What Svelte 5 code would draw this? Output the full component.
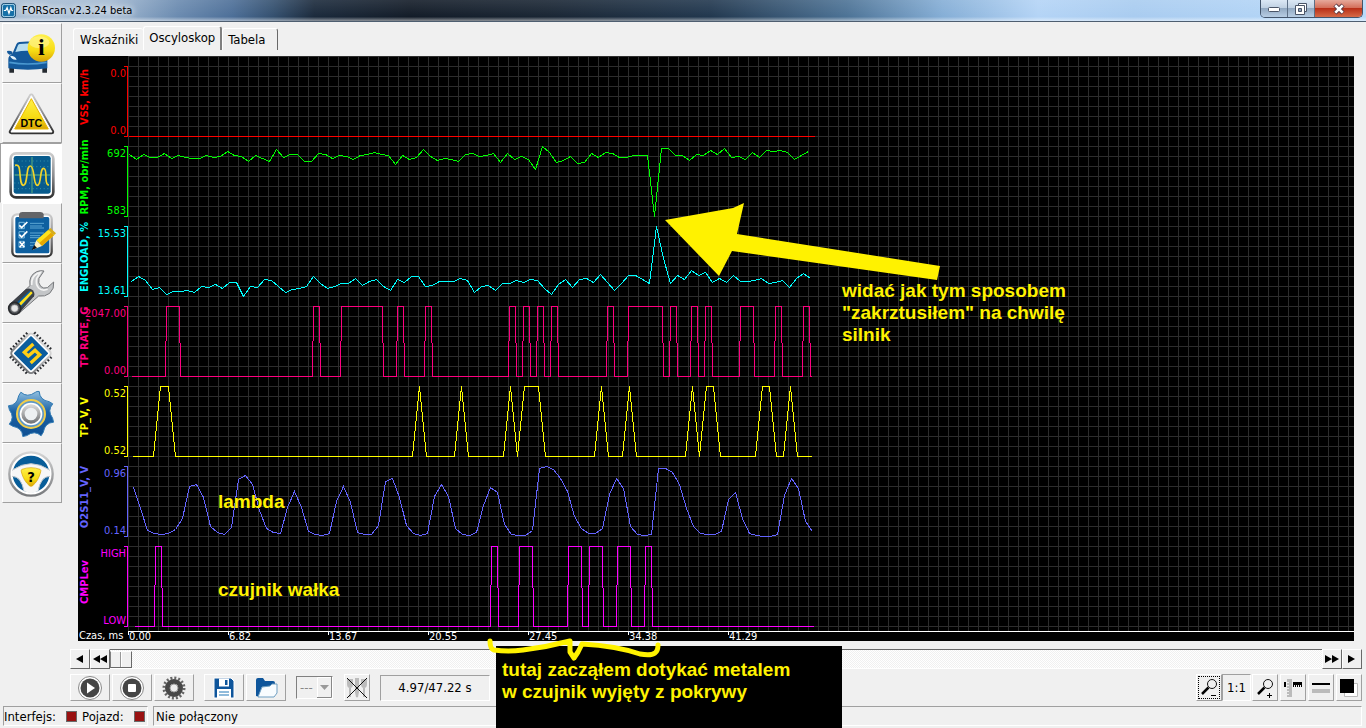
<script lang="ts">
    type Channel = {
        name: string;
        color: string;
        top: number;
        height: number;
        labels: [string, string];
        start: number;
        end?: number;
        samples?: number[];
        pulses?: [number, number][];
        points?: [number, number][];
    };

    const STEP = 7;

    const channels: Channel[] = [
        { name: 'VSS, km/h', color: '#f00', top: 10, height: 70, labels: ['0.0', '0.0'], start: 50, end: 736, pulses: [] },
        {
            name: 'RPM, obr/min', color: '#0f0', top: 90, height: 70, labels: ['692', '583'], start: 51,
            samples: [
                8, 13, 8, 11, 11, 7, 12, 9, 11, 12, 12, 9, 11, 10, 5, 9, 10, 15, 9, 12, 15, 3, 11, 8, 8, 15, 15, 7, 8, 12,
                9, 10, 13, 9, 8, 6, 8, 9, 18, 9, 13, 11, 3, 10, 14, 12, 13, 15, 8, 7, 10, 9, 7, 16, 7, 13, 10, 13, 23, 0,
                6, 16, 14, 10, 17, 16, 7, 11, 6, 7, 11, 11, 9, 9, 9, 70, 2, 2, 9, 9, 14, 8, 9, 4, 8, 2, 11, 10, 13, 6,
                11, 4, 5, 4, 6, 13, 9, 5
            ]
        },
        {
            name: 'ENGLOAD, %', color: '#0ff', top: 170, height: 70, labels: ['15.53', '13.61'], start: 53,
            samples: [
                55, 50, 54, 63, 61, 68, 65, 65, 64, 66, 60, 61, 58, 62, 56, 56, 70, 60, 61, 53, 54, 60, 66, 63, 62, 60,
                50, 57, 62, 60, 57, 57, 52, 59, 55, 53, 60, 64, 53, 56, 50, 50, 60, 59, 55, 55, 55, 52, 54, 66, 60, 59,
                64, 57, 57, 54, 56, 53, 54, 62, 68, 58, 53, 61, 53, 52, 56, 48, 56, 64, 57, 49, 49, 53, 57, 0, 32, 57,
                49, 53, 44, 49, 46, 56, 52, 56, 49, 55, 55, 54, 52, 57, 56, 54, 61, 52, 47, 52
            ]
        },
        {
            name: 'TP RATE, G', color: '#ff0080', top: 250, height: 70, labels: ['2047.00', '0.00'], start: 53, end: 733,
            pulses: [
                [87, 102], [234, 242], [262, 305], [318, 326], [346, 354], [430, 438], [444, 452], [458, 466],
                [472, 480], [528, 536], [549, 585], [591, 599], [612, 620], [626, 634], [661, 676], [696, 704], [724, 732]
            ]
        },
        {
            name: 'TP_V, V', color: '#ff0', top: 330, height: 70, labels: ['0.52', '0.52'], start: 54,
            points: [
                [54, 70], [75, 70], [82, 0], [90, 0], [97, 70], [334, 70], [341, 0], [348, 70], [376, 70], [383, 0],
                [390, 70], [425, 70], [432, 0], [439, 70], [446, 0], [460, 0], [467, 70], [516, 70], [523, 0], [530, 70],
                [544, 70], [551, 0], [558, 70], [607, 70], [614, 0], [621, 70], [628, 0], [635, 0], [642, 70], [677, 70],
                [684, 0], [691, 0], [698, 70], [705, 70], [712, 0], [719, 70], [733, 70]
            ]
        },
        {
            name: 'O2S11_V, V', color: '#6464ff', top: 410, height: 70, labels: ['0.96', '0.14'], start: 55,
            samples: [
                21, 42, 64, 67, 68, 67, 63, 52, 20, 18, 31, 60, 66, 68, 61, 13, 9, 18, 44, 62, 66, 67, 41, 25, 41, 65,
                68, 69, 67, 35, 20, 36, 66, 68, 68, 59, 15, 12, 31, 59, 67, 69, 67, 30, 18, 30, 62, 68, 69, 66, 39, 21,
                26, 58, 68, 69, 69, 64, 2, 0, 3, 12, 25, 50, 62, 67, 67, 62, 28, 12, 22, 60, 68, 69, 68, 2, 2, 6, 18,
                42, 60, 67, 68, 68, 65, 33, 26, 52, 67, 69, 70, 70, 68, 29, 12, 22, 55, 65
            ]
        },
        {
            name: 'CMPLev', color: '#f0f', top: 490, height: 80, labels: ['HIGH', 'LOW'], start: 56, end: 735,
            pulses: [[76, 84], [412, 420], [440, 455], [489, 504], [510, 525], [538, 553], [566, 574]]
        }
    ];

    const times = ['0.00', '6.82', '13.67', '20.55', '27.45', '34.38', '41.29'];
    const tools = ['car', 'dtc', 'scope', 'tests', 'service', 'chip', 'settings', 'help'];
    const tabs = ['Wskaźniki', 'Oscyloskop', 'Tabela'];

    let activeTool = $state('scope');
    let activeTab = $state('Oscyloskop');
    let position = $state(0);

    function trace(c: Channel) {
        if (c.samples) {
            return c.samples.map((v, i) => `${c.start + i * STEP},${c.top + v}`).join(' ');
        }
        if (c.points) {
            return c.points.map(([x, y]) => `${x},${c.top + y}`).join(' ');
        }
        const low = c.top + c.height;
        const out = [`${c.start},${low}`];
        for (const [a, b] of c.pulses ?? []) {
            out.push(`${a},${low}`, `${a + 1},${c.top}`, `${b - 1},${c.top}`, `${b},${low}`);
        }
        out.push(`${c.end},${low}`);
        return out.join(' ');
    }

    function polar(deg: number, r: number) {
        const a = (deg * Math.PI) / 180;
        return `${(87 + r * Math.cos(a)).toFixed(1)} ${(93 + r * Math.sin(a)).toFixed(1)}`;
    }

    // eight teeth with hollows curved between them
    function gear() {
        let d = `M${polar(-75, 70)}`;
        for (let a = -75; a < 285; a += 45) {
            d += `L${polar(a + 5, 72)}Q${polar(a + 17, 49)} ${polar(a + 41, 66)}`;
        }
        return d + 'z';
    }
</script>

<div class="window">
    <header class="titlebar">
        <svg class="app-icon" viewBox="0 0 16 16" aria-hidden="true">
            <rect x="0.5" y="0.5" width="15" height="15" rx="3" fill="#1670a8" stroke="#0c3f66" />
            <rect x="1.5" y="1.5" width="13" height="13" rx="2" fill="none" stroke="#b9dcef" />
            <path d="M3 8h2l1.5-3 2 6 2-6 1 3h1.5" fill="none" stroke="#fff" stroke-width="1.3" />
        </svg>
        <span class="title">FORScan v2.3.24 beta</span>
        <div class="window-buttons">
            <button class="min" aria-label="Minimalizuj">
                <svg width="14" height="8" viewBox="0 0 14 8"><rect x="1.5" y="2.5" width="11" height="4" rx="1" fill="#fff" stroke="#4a5568" /></svg>
            </button>
            <button class="max" aria-label="Przywróć">
                <svg width="14" height="14" viewBox="0 0 14 14">
                    <path d="M4.5 1.5h8v8h-8z" fill="#fff" stroke="#4a5568" />
                    <path d="M1.5 3.5h9v9h-9z" fill="#fff" stroke="#4a5568" />
                    <path d="M4.5 6.5h3v3h-3z" fill="#8fa3ba" stroke="#4a5568" />
                </svg>
            </button>
            <button class="close" aria-label="Zamknij">
                <svg width="14" height="12" viewBox="0 0 14 12">
                    <path d="M3 2l8 8M11 2l-8 8" stroke="#5a3a44" stroke-width="4.5" />
                    <path d="M3.3 2.3l7.4 7.4M10.7 2.3l-7.4 7.4" stroke="#fff" stroke-width="2.6" />
                </svg>
            </button>
        </div>
    </header>

    <div class="body">
        <nav class="sidebar">
            {#each tools as tool}
                <button class="tool" class:active={tool === activeTool} aria-label={tool} onclick={() => (activeTool = tool)}>
                    <svg viewBox="0 0 180 180" width="60" height="60">
                        {#if tool === 'car'}
                            <path d="M22 149h14v-14h-14zM121 149h14v-14h-14z" fill="#252a30" />
                            <path d="M19 136V108q0-10 12-16L43 64q2-6 9-7 24-3 48 0 7 1 9 7l8 24q18 6 19 20v28q-58 8-117 0z" fill="#14599b" />
                            <path d="M40 87l8-20q2-4 6-4 22-3 44 0 4 0 6 4l6 20q-35-7-70 0z" fill="#b8def0" />
                            <path d="M15 84q8-3 16 2l1 7-10 2q-8-4-7-11z" fill="#14599b" />
                            <path d="M24 98q16 0 20 12-14 2-20-12zM132 98q-16 0-20 12 14 2 20-12z" fill="#e4f3fb" />
                            <path d="M22 118q55 10 112 0" fill="none" stroke="#4a98d0" stroke-width="5" />
                            <circle cx="118" cy="75" r="41" fill="url(#gold)" />
                            <ellipse cx="112" cy="58" rx="30" ry="18" fill="#fff59a" opacity="0.6" />
                            <text x="118" y="97" font-family="Liberation Serif, serif" font-weight="bold" font-size="72" text-anchor="middle">i</text>
                        {:else if tool === 'dtc'}
                            <path d="M88 39L28 146H149z" fill="#fff" stroke="url(#steel)" stroke-width="15" stroke-linejoin="round" />
                            <path d="M88 38L27 147H150z" fill="#fff" stroke="#fff" stroke-width="3" stroke-linejoin="round" />
                            <path d="M88 47L38 138H139z" fill="url(#gold)" stroke="#e8b800" stroke-width="3" stroke-linejoin="round" />
                            <text x="88" y="131" font-family="Liberation Sans, sans-serif" font-weight="bold" font-size="32" text-anchor="middle">DTC</text>
                        {:else if tool === 'scope'}
                            <rect x="26" y="31" width="128" height="132" rx="16" fill="#fff" stroke="url(#steel)" stroke-width="8" />
                            <rect x="35" y="39" width="111" height="113" rx="7" fill="#075b8d" />
                            <path d="M37 54h108M37 71h108M37 120h108M37 137h108" stroke="#3491ac" stroke-width="3" stroke-dasharray="3 8" />
                            <path d="M90 42v108M38 96h106" stroke="#4a9a82" stroke-width="4" />
                            <path d="M39 67c13-3 13 7 15 27s3 33 10 33 9-15 11-32 3-26 10-26 9 16 11 30 3 28 10 28 8-14 10-28 3-23 9-23 7 15 7 28 2 22 9 22" fill="none" stroke="#f3d42a" stroke-width="5" />
                        {:else if tool === 'tests'}
                            <rect x="31" y="34" width="118" height="126" rx="14" fill="#fff" stroke="url(#steel)" stroke-width="7" />
                            <rect x="40" y="42" width="102" height="109" rx="5" fill="#0e60a0" />
                            <path d="M51 46V34q2-7 10-7h54q8 0 10 7v12z" fill="#646568" />
                            <path d="M51 58h16v19h-16zM51 86h16v19h-16zM51 115h16v18h-16z" fill="none" stroke="#76b6dc" stroke-width="3" />
                            <path d="M52 67l7 7 17-17M52 95l7 7 17-17M53 116l14 17M67 116l-14 17" fill="none" stroke="#fff" stroke-width="5" />
                            <path d="M84 61h42M84 69h36M84 75h42M84 90h42M84 98h30M84 104h35M84 119h20M84 127h10" stroke="#5ca6d3" stroke-width="3" />
                            <path d="M103 112l36-32 17 17-36 32z" fill="#ffe31c" /><path d="M111 121l36-32 9 8-36 32z" fill="#e5a700" />
                            <path d="M139 80l6-5 17 16-6 6z" fill="#d8ae19" />
                            <path d="M103 112l17 17-28 11z" fill="#fff2c4" /><path d="M97 126l8 9-16 6z" fill="#111" />
                        {:else if tool === 'service'}
                            <path d="M24 124L84 68q-5-30 20-42 12-5 22-2l-15 22q-4 14 5 24 8 8 20 4l19-17q3 20-12 34-14 11-33 8L52 150z" fill="#c4c6c8" stroke="#77797c" stroke-width="3" />
                            <path d="M89 66q-2-24 18-35l8-2-11 18q-4 17 6 28 11 10 27 4" fill="none" stroke="#f4f4f4" stroke-width="5" />
                            <path d="M24 122L72 78q12-5 20 4t4 18L52 150z" fill="#3d4148" />
                            <path d="M42 121l41-38 8 8-36 44z" fill="#0a5f9d" /><path d="M51 121l36-36 5 5-36 38z" fill="#ffdf19" />
                            <circle cx="38" cy="136" r="18" fill="#55585c" stroke="#292b2e" stroke-width="5" />
                            <circle cx="38" cy="136" r="10" fill="#e8e8e8" stroke="#bbb" stroke-width="2" />
                        {:else if tool === 'chip'}
                            <g transform="rotate(45 87 91)">
                                <path d="M52 36v110M63 36v110M74 36v110M85 36v110M96 36v110M107 36v110M118 36v110M32 58h110M32 69h110M32 80h110M32 91h110M32 102h110M32 113h110M32 124h110" stroke="#292b2f" stroke-width="5" />
                                <rect x="42" y="46" width="90" height="90" rx="11" fill="#fff" stroke="url(#steelLight)" stroke-width="6" />
                                <rect x="50" y="54" width="74" height="74" rx="3" fill="#0b5d9e" />
                            </g>
                            <path d="M94 63L67 88L79 99L99 82L113 95L86 120" fill="none" stroke="#ffcf16" stroke-width="10" />
                        {:else if tool === 'settings'}
                            <path d={gear()} fill="url(#blue)" stroke="#327bb4" stroke-width="3" stroke-linejoin="round" />
                            <circle cx="87" cy="93" r="42" fill="#5d97c6" stroke="#f0cd4b" stroke-width="6" />
                            <circle cx="87" cy="93" r="34" fill="#fff" />
                            <circle cx="87" cy="93" r="24" fill="#edf0f2" stroke="url(#steelLight)" stroke-width="10" />
                        {:else}
                            <circle cx="87" cy="93" r="65" fill="#fff" stroke="url(#steelLight)" stroke-width="7" />
                            <circle cx="87" cy="93" r="55" fill="#075d99" />
                            <path d="M30 82q57-40 114 0v18q-28 0-36 45l-21 6-21-6q-8-45-36-45z" fill="#f7f7f7" />
                            <path d="M30 82q57-40 114 0M30 100q28 0 36 45M144 100q-28 0-36 45" fill="none" stroke="#c2c8cc" stroke-width="3" />
                            <path d="M60 79q27-10 54 0 4 1 2 8-7 27-24 41-5 4-10 0-17-14-24-41-2-7 2-8z" fill="url(#gold)" stroke="#d6a507" stroke-width="2" />
                            <text x="87" y="118" font-family="DejaVu Sans, sans-serif" font-weight="bold" font-size="44" text-anchor="middle">?</text>
                        {/if}
                    </svg>
                </button>
            {/each}
        </nav>

        <main class="content">
            <div class="tabs" role="tablist">
                {#each tabs as tab}
                    <button class="tab" role="tab" class:active={tab === activeTab} aria-selected={tab === activeTab} onclick={() => (activeTab = tab)}>{tab}</button>
                {/each}
            </div>

            <div class="chart">
                <svg class="plot" width="100%" height="585">
                    <defs>
                        <pattern id="grid" x="0" width="10" height="10" patternUnits="userSpaceOnUse">
                            <path d="M0 0.5H10M0.5 0V10" stroke="#2d2d2d" />
                        </pattern>
                    </defs>
                    <rect class="grid" x="50" height="575" fill="url(#grid)" />
                    <g class="lines" transform="translate(0.5 0.5)">
                        {#each channels as c}
                            <path d="M45 {c.top}H49V{c.top + c.height}H45" stroke={c.color} />
                            <polyline points={trace(c)} stroke={c.color} />
                        {/each}
                        {#each times as _, i}
                            <path d="M{50 + i * 100} 575v3" stroke="#fff" />
                        {/each}
                    </g>
                    <rect class="grid" x="50" y="575" height="1" fill="#fff" />
                    {#each channels as c}
                        <g fill={c.color}>
                            <text class="channel" text-anchor="middle" transform="translate(10 {c.top + c.height / 2 - 4}) rotate(-90)">{c.name}</text>
                            <text x="48" y={c.top + 11} text-anchor="end">{c.labels[0]}</text>
                            <text x="48" y={c.top + c.height - 2} text-anchor="end">{c.labels[1]}</text>
                        </g>
                    {/each}
                    <g class="remark">
                        <path d="M587 164L655 152L666 147L659 178L862 210L859 224L654 195L641 220z" />
                        <text x="140" y="452">lambda</text>
                        <text x="140" y="540">czujnik wałka</text>
                        <text x="764" y="241">widać jak tym sposobem</text>
                        <text x="764" y="263">"zakrztusiłem" na chwilę</text>
                        <text x="764" y="285">silnik</text>
                    </g>
                    <g fill="#fff">
                        <text x="1" y="583">Czas, ms</text>
                        {#each times as t, i}
                            <text x={51 + i * 100} y="584">{t}</text>
                        {/each}
                    </g>
                </svg>
                <div class="note">
                    <svg class="brace" width="180" height="26" viewBox="0 0 180 26" aria-hidden="true">
                        <path d="M4 5q0 8 4 9 14 2 29 0 24-3 47-9v11l4 6 4-6 4-8q35 2 58 10 11 2 15-1 3-2 3-8" fill="none" stroke="#fff200" stroke-width="5" stroke-linecap="round" stroke-linejoin="round" />
                    </svg>
                    tutaj zacząłem dotykać metalem<br />w czujnik wyjęty z pokrywy
                </div>
            </div>

            <div class="scroller">
                <button aria-label="Wstecz"><svg width="8" height="8"><path d="M7 0v8L0 4z" /></svg></button>
                <button aria-label="Szybko wstecz"><svg width="14" height="8"><path d="M7 0v8L0 4zM14 0v8L7 4z" /></svg></button>
                <input type="range" min="0" max="100" bind:value={position} aria-label="Pozycja" />
                <button aria-label="Szybko naprzód"><svg width="14" height="8"><path d="M0 0v8l7-4zM7 0v8l7-4z" /></svg></button>
                <button aria-label="Naprzód"><svg width="8" height="8"><path d="M0 0v8l7-4z" /></svg></button>
            </div>

            <div class="toolbar">
                <button class="wide" aria-label="Start">
                    <svg width="24" height="24" viewBox="0 0 24 24"><circle cx="12" cy="12" r="11.5" fill="#fff" stroke="#888" /><circle cx="12" cy="12" r="9.5" fill="#454545" /><path d="M9 6.5v11l8-5.5z" fill="#fff" /></svg>
                </button>
                <button class="wide" aria-label="Stop">
                    <svg width="24" height="24" viewBox="0 0 24 24"><circle cx="12" cy="12" r="11.5" fill="#fff" stroke="#888" /><circle cx="12" cy="12" r="9.5" fill="#454545" /><rect x="8" y="8" width="8" height="8" rx="1" fill="#fff" /></svg>
                </button>
                <button class="wide" aria-label="Ustawienia">
                    <svg width="24" height="24" viewBox="0 0 24 24">
                        <circle cx="12" cy="12" r="10" fill="none" stroke="#666" stroke-width="3" stroke-dasharray="2 1.927" />
                        <circle cx="12" cy="12" r="6.5" fill="none" stroke="#484848" stroke-width="5" />
                        <circle cx="12" cy="12" r="4" fill="#eee" stroke="#999" />
                    </svg>
                </button>
                <button class="wide save" aria-label="Zapisz">
                    <svg width="22" height="22" viewBox="0 0 22 22"><path d="M1 1h17l3 3v17H1z" fill="#0e559b" stroke="#fff" /><path d="M6 1.5h10v8H6z" fill="#fff" /><path d="M12 3h2.5v5H12z" fill="#0e559b" /><path d="M4 12h14v9H4z" fill="#fff" /><path d="M6 15h10M6 18h10" stroke="#6ca5cf" stroke-width="1.5" /></svg>
                </button>
                <button class="wide" aria-label="Otwórz">
                    <svg width="24" height="22" viewBox="0 0 24 22"><path d="M2 19V3q0-2 2-2h5l2 3h8q2 0 2 2v4L6 20z" fill="#0e559b" /><path d="M8 10l8-1 2-2h5v9l-3 4H4z" fill="#f8fcff" stroke="#6f9fc2" /></svg>
                </button>
                <div class="combo">
                    <select disabled aria-label="Kanał"><option>---</option></select>
                    <svg width="15" height="21"><path d="M0.5 21V0.5H15" fill="none" stroke="#fff" /><path d="M14.5 0V20.5H0" fill="none" stroke="#888" /><path d="M3 8h9l-4.5 5z" fill="#999" /></svg>
                </div>
                <button class="small filter" aria-label="Filtr">
                    <svg width="22" height="22" viewBox="0 0 22 22"><path d="M2 2v5q0 3 2 3v10M4 2v8M6 2v5q0 3-2 3M10 1v14l1 5 1-5V1M16 2v5q0 3 2 3v10M18 2v8M20 2v5q0 3-2 3" fill="none" stroke="#bbb" stroke-width="2" /><path d="M1 1l20 20M21 1L1 21" stroke="#111" /></svg>
                </button>
                <output class="clock">4.97/47.22 s</output>
                <div class="view-buttons">
                    <button class="small focused" aria-label="Pomniejsz">
                        <svg width="20" height="20" viewBox="0 0 20 20"><circle cx="13" cy="6" r="4.5" fill="none" stroke="#111" /><path d="M9.5 9.5L3 16" stroke="#000" stroke-width="2.5" /><path d="M12 17.5h5" stroke="#000" /></svg>
                    </button>
                    <button class="small pressed">1:1</button>
                    <button class="small" aria-label="Powiększ">
                        <svg width="20" height="20" viewBox="0 0 20 20"><circle cx="13" cy="6" r="4.5" fill="none" stroke="#111" /><path d="M9.5 9.5L3 16" stroke="#000" stroke-width="2.5" /><path d="M12 17.5h5M14.5 15v5" stroke="#000" /></svg>
                    </button>
                    <button class="small" aria-label="Podziałka">
                        <svg width="20" height="20" viewBox="0 0 20 20"><path d="M4 1h5v18H4z" fill="#bbb" /><path d="M4 4.5h2M4 7.5h2M4 10.5h2M4 13.5h2M4 16.5h2" stroke="#eee" /><path d="M1 4h2v5H1zM10 4h9v3h-9z" /><path d="M10.5 4v5M12.5 4v5M14.5 4v5M16.5 4v5M18.5 4v5" stroke="#000" /></svg>
                    </button>
                    <button class="small" aria-label="Linie">
                        <svg width="20" height="20" viewBox="0 0 20 20"><path d="M1 5h18v2H1z" /><path d="M1 11h18v4H1z" fill="#bbb" /></svg>
                    </button>
                    <button class="small" aria-label="Kolory">
                        <svg width="20" height="20" viewBox="0 0 20 20"><path d="M5.5 5.5h13v13h-13z" fill="#fff" stroke="#bbb" /><path d="M1 1h14v14H1z" /></svg>
                    </button>
                </div>
            </div>
        </main>
    </div>

    <footer class="status">
        <div class="panel leds">
            <span>Interfejs:</span><i class="led"></i>
            <span>Pojazd:</span><i class="led"></i>
        </div>
        <div class="panel message">Nie połączony</div>
    </footer>

    <svg class="defs" width="0" height="0" aria-hidden="true">
        <linearGradient id="gold" x1="0" y1="0" x2="0" y2="1"><stop offset="0" stop-color="#fff04a" /><stop offset="0.6" stop-color="#f7dc14" /><stop offset="1" stop-color="#d9a404" /></linearGradient>
        <linearGradient id="steel" x1="0" y1="0" x2="0" y2="1"><stop offset="0" stop-color="#ccc" /><stop offset="0.5" stop-color="#8d8d90" /><stop offset="1" stop-color="#333" /></linearGradient>
        <linearGradient id="steelLight" x1="0" y1="0" x2="0" y2="1"><stop offset="0" stop-color="#d5d5d5" /><stop offset="1" stop-color="#77797c" /></linearGradient>
        <linearGradient id="blue" x1="0" y1="0" x2="0" y2="1"><stop offset="0" stop-color="#8fbfe0" /><stop offset="0.45" stop-color="#1a62a5" /><stop offset="1" stop-color="#0f4f92" /></linearGradient>
    </svg>
</div>

<style>
    :global(body) {
        background: #f0f0f0;
    }

    .window {
        display: flex;
        flex-direction: column;
        min-height: 100vh;
        font-family: 'DejaVu Sans Condensed', 'DejaVu Sans', sans-serif;
        font-stretch: condensed;
        font-size: 13px;
        color: #000;
    }

    button {
        box-sizing: border-box;
        display: flex;
        align-items: center;
        justify-content: center;
        padding: 0;
        border: 1px solid;
        border-color: #fff #a0a0a0 #a0a0a0 #fff;
        background: #f0f0f0;
        font: inherit;
        color: inherit;
    }

    .titlebar {
        box-sizing: border-box;
        display: flex;
        align-items: center;
        height: 22px;
        padding-left: 1px;
        border-bottom: 1px solid #4e5e70;
        background:
            linear-gradient(rgba(255, 255, 255, 0.1), transparent 80%, rgba(255, 255, 255, 0.5)),
            linear-gradient(90deg, #a9bdd3 0, #a3bad3 8%, #6b8bb0 13%, #4d6f98 17%, #34506f 20%, #1b2a3c 23%, #131c28 30%, #1a2634 40%, #22384f 52%, #4d7396 62%, #85aed6 69%, #b4d4f6 76%, #a9ccf0 83%, #b9dafa 100%);
    }

    .app-icon {
        width: 15px;
        height: 15px;
        margin-right: 6px;
    }

    .title {
        font-size: 11px;
        text-shadow: 0 0 6px #fff, 0 0 8px #fff;
    }

    .window-buttons {
        display: flex;
        align-self: flex-start;
        margin: 0 3px 0 auto;
        border: 1px solid #42546b;
        border-top: 0;
        border-radius: 0 0 5px 5px;
        overflow: hidden;
    }

    .window-buttons button {
        height: 17px;
        border-width: 0 1px 0 0;
        border-color: #5c6f86;
        background: linear-gradient(#dbe8f5 0, #c0d1e3 45%, #92a9c2 50%, #b7cde4 100%);
    }

    .window-buttons .min,
    .window-buttons .max {
        width: 27px;
    }

    .window-buttons .close {
        width: 47px;
        border-right: 0;
        background: linear-gradient(#e6a99b 0, #d4705b 45%, #b93018 50%, #d66a48 100%);
    }

    .body {
        display: flex;
        flex: 1;
    }

    .sidebar {
        display: flex;
        flex-direction: column;
        align-items: flex-end;
        width: 62px;
        padding-top: 1px;
        flex: none;
    }

    .tool {
        width: 60px;
        height: 60px;
    }

    .tool.active {
        width: 62px;
        padding-left: 2px;
        border-color: #a0a0a0 #fff #fff #a0a0a0;
        background: #fff;
    }

    .tool svg {
        flex: none;
    }

    .content {
        flex: 1;
        min-width: 0;
        padding: 4px 4px 0 8px;
    }

    .tabs {
        display: flex;
        align-items: flex-end;
        height: 24px;
        padding-left: 3px;
        margin-bottom: 6px;
    }

    .tab {
        height: 22px;
        padding: 0 5px;
        border-width: 1px 1px 0 1px;
        border-color: #fff #696969 #fff #fff;
        border-radius: 3px 3px 0 0;
    }

    .tab:first-child {
        padding-left: 6px;
        border-right: 0;
    }

    .tab:last-child {
        padding-right: 12px;
    }

    .tab.active {
        height: 24px;
        border-right-width: 2px;
        border-right-color: #808080;
        padding-bottom: 3px;
    }

    .chart {
        position: relative;
        margin: 0 8px;
        background: #000;
    }

    .plot {
        display: block;
        overflow: visible;
        font-size: 11px;
    }

    .grid {
        width: calc(100% - 50px);
    }

    .lines {
        fill: none;
        shape-rendering: crispEdges;
    }

    .channel {
        font-weight: bold;
    }

    .remark {
        fill: #fff200;
        font: bold 19px 'Liberation Sans', Arial, sans-serif;
    }

    .note {
        position: absolute;
        left: 418px;
        top: 590px;
        z-index: 1;
        box-sizing: border-box;
        width: 346px;
        height: 82px;
        padding: 13px 6px;
        background: #000;
        color: #fff200;
        font: bold 19px/22px 'Liberation Sans', Arial, sans-serif;
        white-space: nowrap;
    }

    .brace {
        position: absolute;
        left: -10px;
        top: -10px;
    }

    .scroller {
        display: flex;
        height: 20px;
        margin-top: 8px;
    }

    .scroller button {
        width: 20px;
        border-right-color: #696969;
        border-bottom-color: #696969;
    }

    .scroller input {
        flex: 1;
        min-width: 0;
        margin: 0;
        appearance: none;
        border-top: 1px solid #696969;
        border-bottom: 1px solid #fff;
        background: repeating-conic-gradient(#fff 0 25%, #f0f0f0 0 50%) 0 0 / 2px 2px;
    }

    .scroller input::-webkit-slider-thumb {
        appearance: none;
        box-sizing: border-box;
        width: 22px;
        height: 17px;
        border: 1px solid;
        border-color: #fff #696969 #696969 #808080;
        background: linear-gradient(90deg, transparent 9px, #999 9px 10px, #fff 10px 11px, transparent 11px) #f0f0f0;
    }

    .toolbar {
        display: flex;
        align-items: center;
        gap: 2px;
        height: 27px;
        margin-top: 5px;
    }

    .wide {
        width: 40px;
        height: 27px;
    }

    .save {
        margin-left: 8px;
    }

    .small {
        width: 26px;
        height: 27px;
    }

    .combo {
        display: flex;
        box-sizing: border-box;
        width: 37px;
        height: 23px;
        margin: 0 9px 0 8px;
        border: 1px solid;
        border-color: #808080 #fff #fff #808080;
    }

    .combo select {
        flex: 1;
        min-width: 0;
        padding: 0 0 0 3px;
        appearance: none;
        border: 0;
        background: none;
        color: #888;
        font: inherit;
        opacity: 1;
    }

    .clock {
        box-sizing: border-box;
        width: 110px;
        height: 26px;
        margin-left: 8px;
        border: 1px solid;
        border-color: #a0a0a0 #fff #fff #a0a0a0;
        line-height: 24px;
        text-align: center;
    }

    .view-buttons {
        display: flex;
        gap: 2px;
        margin-left: auto;
    }

    .focused {
        outline: 1px dotted #000;
        outline-offset: -3px;
    }

    .pressed {
        width: 29px;
        margin: 0 -1px 0 -2px;
        border-color: #a0a0a0 #fff #fff #a0a0a0;
    }

    .status {
        display: flex;
        gap: 5px;
        height: 20px;
        padding: 5px 4px 2px 3px;
    }

    .panel {
        display: flex;
        align-items: center;
        box-sizing: border-box;
        border: 1px solid;
        border-color: #a0a0a0 #fff #fff #a0a0a0;
    }

    .leds {
        gap: 5px;
        width: 145px;
    }

    .led {
        box-sizing: border-box;
        flex: none;
        width: 11px;
        height: 11px;
        margin-left: 5px;
        border: 1px solid #6a6a6a;
        background: #991111;
    }

    .message {
        flex: 1;
        padding-left: 2px;
    }

    .defs {
        position: absolute;
    }
</style>
